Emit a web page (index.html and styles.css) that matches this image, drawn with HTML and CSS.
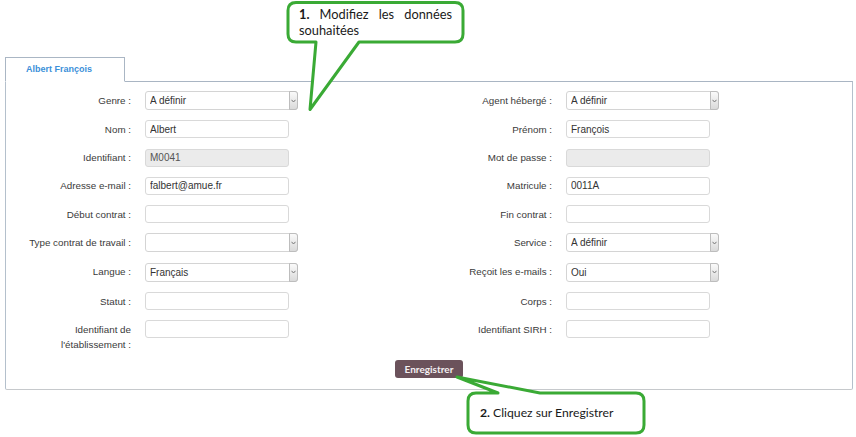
FILE: index.html
```html
<!DOCTYPE html>
<html lang="fr">
<head>
  <meta charset="UTF-8" />
  <meta name="viewport" content="width=device-width, initial-scale=1.0"/>
  <title>Fiche agent</title>
  <link rel="stylesheet" href="styles.css">
</head>
<body>
  <div class="page">
    <div class="tabs">
      <div class="tab active">Albert François</div>
    </div>

    <div class="panel">
      <form class="form">
        <label class="lbl">Genre :</label>
        <span class="select-wrap"><select><option>A définir</option></select><span class="arrow"><svg width="5" height="4" viewBox="0 0 5 4"><path d="M0.5 0.8 L2.5 3 L4.5 0.8" fill="none" stroke="#777" stroke-width="1"/></svg></span></span>
        <label class="lbl">Agent hébergé :</label>
        <span class="select-wrap"><select><option>A définir</option></select><span class="arrow"><svg width="5" height="4" viewBox="0 0 5 4"><path d="M0.5 0.8 L2.5 3 L4.5 0.8" fill="none" stroke="#777" stroke-width="1"/></svg></span></span>

        <label class="lbl">Nom :</label>
        <input type="text" value="Albert" />
        <label class="lbl">Prénom :</label>
        <input type="text" value="François" />

        <label class="lbl">Identifiant :</label>
        <input type="text" value="M0041" disabled />
        <label class="lbl">Mot de passe :</label>
        <input type="password" disabled />

        <label class="lbl">Adresse e-mail :</label>
        <input type="text" value="falbert@amue.fr" />
        <label class="lbl">Matricule :</label>
        <input type="text" value="0011A" />

        <label class="lbl">Début contrat :</label>
        <input type="text" />
        <label class="lbl">Fin contrat :</label>
        <input type="text" />

        <label class="lbl">Type contrat de travail :</label>
        <span class="select-wrap"><select><option></option></select><span class="arrow"><svg width="5" height="4" viewBox="0 0 5 4"><path d="M0.5 0.8 L2.5 3 L4.5 0.8" fill="none" stroke="#777" stroke-width="1"/></svg></span></span>
        <label class="lbl">Service :</label>
        <span class="select-wrap"><select><option>A définir</option></select><span class="arrow"><svg width="5" height="4" viewBox="0 0 5 4"><path d="M0.5 0.8 L2.5 3 L4.5 0.8" fill="none" stroke="#777" stroke-width="1"/></svg></span></span>

        <label class="lbl">Langue :</label>
        <span class="select-wrap"><select><option>Français</option></select><span class="arrow"><svg width="5" height="4" viewBox="0 0 5 4"><path d="M0.5 0.8 L2.5 3 L4.5 0.8" fill="none" stroke="#777" stroke-width="1"/></svg></span></span>
        <label class="lbl">Reçoit les e-mails :</label>
        <span class="select-wrap"><select><option>Oui</option></select><span class="arrow"><svg width="5" height="4" viewBox="0 0 5 4"><path d="M0.5 0.8 L2.5 3 L4.5 0.8" fill="none" stroke="#777" stroke-width="1"/></svg></span></span>

        <label class="lbl">Statut :</label>
        <input type="text" />
        <label class="lbl">Corps :</label>
        <input type="text" />

        <label class="lbl">Identifiant de<br>l'établissement :</label>
        <input type="text" />
        <label class="lbl">Identifiant SIRH :</label>
        <input type="text" />
      </form>

      <div class="actions">
        <button type="button" class="btn">Enregistrer</button>
      </div>
    </div>
  </div>

  <!-- tutorial callouts over the screen -->
  <svg class="callouts" width="856" height="437" viewBox="0 0 856 437">
    <path d="M296 2.5 H455 Q463 2.5 463 10.5 V34 Q463 42 455 42 H359 L310 109.5 L316 42 H296 Q288 42 288 34 V10.5 Q288 2.5 296 2.5 Z" />
    <path d="M476 393 H498 L457 377 L540 393 H636 Q644 393 644 401 V425 Q644 433 636 433 H476 Q468 433 468 425 V401 Q468 393 476 393 Z" />
  </svg>
  <div class="note note-1"><span class="line"><b>1.</b> Modifiez les données</span> <span class="line">souhaitées</span></div>
  <div class="note note-2"><b>2.</b> Cliquez sur Enregistrer</div>
</body>
</html>
```

FILE: styles.css
```css
body {
  margin: 0;
  font-family: "Liberation Sans", Arial, sans-serif;
  font-size: 9.8px;
  color: #333;
  background: #fff;
}

.page {
  padding: 57px 3px 0 5px;
}

.tabs {
  display: flex;
  margin-bottom: -1px;
  position: relative;
  z-index: 1;
}

.tab {
  width: 98px;
  height: 23px;
  padding-left: 20px;
  line-height: 23px;
  border: 1px solid #aab6c4;
  border-bottom: 1px solid #fff;
  background: #fff;
  color: #3b8fd9;
  font-weight: bold;
  font-size: 9px;
}

.panel {
  border: 1px solid #b4c0cc;
  border-top-color: #a9b5c3;
  border-bottom-color: #c6c9cc;
  border-radius: 0 0 2px 2px;
  padding: 9px 0 11px 0;
}

.form {
  display: grid;
  grid-template-columns: 125px 268px 125px 1fr;
  column-gap: 14px;
  row-gap: 10.3px;
  align-items: start;
}

.lbl {
  text-align: right;
  line-height: 15px;
  padding-top: 1.5px;
  color: #3a3a3a;
}

.form input {
  box-sizing: border-box;
  width: 144px;
  height: 18px;
  margin: 0;
  padding: 0 4px;
  border: 1px solid #d9d9d9;
  border-radius: 3px;
  font-family: "Liberation Sans", Arial, sans-serif;
  font-size: 10px;
  color: #333;
  background: #fff;
}

.form input:disabled {
  background: #ebebeb;
  color: #555;
}

.select-wrap {
  position: relative;
  display: block;
  width: 153px;
  height: 19px;
}

.select-wrap select {
  appearance: none;
  box-sizing: border-box;
  width: 100%;
  height: 19px;
  margin: 0;
  padding: 0 4px;
  border: 1px solid #d4d4d4;
  border-radius: 3px;
  background: #fff;
  font-family: "Liberation Sans", Arial, sans-serif;
  font-size: 10px;
  color: #333;
}

.select-wrap .arrow {
  position: absolute;
  top: 0;
  right: 0;
  width: 9px;
  height: 19px;
  box-sizing: border-box;
  border: 1px solid #bdbdbd;
  border-radius: 0 3px 3px 0;
  background: linear-gradient(#fafafa, #dadada);
  display: flex;
  align-items: center;
  justify-content: center;
}

.actions {
  display: flex;
  justify-content: center;
  margin-top: 8px;
}

.btn {
  height: 18px;
  padding: 0 10px;
  border: none;
  border-radius: 3px;
  background: #6b525b;
  color: #f4f0f2;
  font-family: Lato, "Liberation Sans", sans-serif;
  font-weight: bold;
  font-size: 10px;
}

.callouts {
  position: absolute;
  top: 0;
  left: 0;
  pointer-events: none;
}

.callouts path {
  fill: #fff;
  stroke: #3aaa35;
  stroke-width: 3;
  stroke-linejoin: round;
}

.note {
  position: absolute;
  font-family: Lato, "Liberation Sans", sans-serif;
  font-size: 12.8px;
  line-height: 15.5px;
  color: #1a1a1a;
}

.note-1 {
  top: 7px;
  left: 299px;
  width: 153px;
  text-align: justify;
}

.note-2 {
  top: 405px;
  left: 480px;
  font-size: 12.2px;
}
```
